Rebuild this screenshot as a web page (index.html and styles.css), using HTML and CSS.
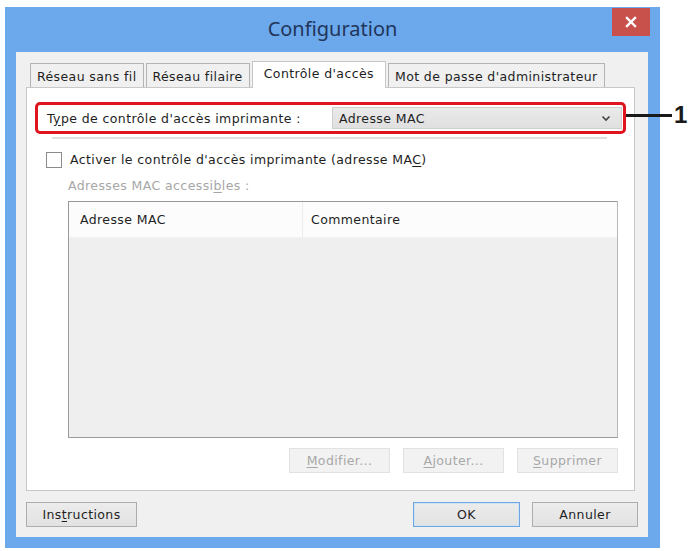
FILE: index.html
```html
<!DOCTYPE html>
<html lang="fr">
<head>
<meta charset="utf-8">
<title>Configuration</title>
<link rel="stylesheet" href="styles.css">
</head>
<body>
<div class="window">
  <div class="titlebar">
    <span class="spacer"></span>
    <div class="title">Configuration</div>
    <div class="close-wrap">
      <div class="close">
        <svg width="12" height="12" viewBox="0 0 12 12"><path d="M2 2 L10 10 M10 2 L2 10" stroke="#fff" stroke-width="2.4" stroke-linecap="square"/></svg>
      </div>
    </div>
  </div>
  <div class="client">
    <div class="tabs">
      <div class="tab">Réseau sans fil</div>
      <div class="tab">Réseau filaire</div>
      <div class="tab active">Contrôle d'accès</div>
      <div class="tab">Mot de passe d'administrateur</div>
    </div>
    <div class="panel">
      <div class="type-row">
        <div class="type-label">T<u>y</u>pe de contrôle d'accès imprimante :</div>
        <div class="select">
          <span>Adresse MAC</span>
          <svg class="chev" width="10" height="7" viewBox="0 0 10 7"><path d="M1.5 1.5 L5 5 L8.5 1.5" fill="none" stroke="#444" stroke-width="1.6"/></svg>
        </div>
      </div>
      <div class="rule"></div>
      <div class="check-row">
        <span class="box"></span>
        <span>Activer le contrôle d'accès imprimante (adresse MA<u>C</u>)</span>
      </div>
      <div class="sub">Adresses MAC accessi<u>b</u>les :</div>
      <div class="list">
        <div class="list-head">
          <div class="col col1">Adresse MAC</div>
          <div class="col col2">Commentaire</div>
        </div>
        <div class="list-body"></div>
      </div>
      <div class="list-actions">
        <div class="btn disabled"><u>M</u>odifier...</div>
        <div class="btn disabled"><u>A</u>jouter...</div>
        <div class="btn disabled"><u>S</u>upprimer</div>
      </div>
    </div>
    <div class="footer">
      <div class="btn wide">Ins<u>t</u>ructions</div>
      <div class="footer-right">
        <div class="btn default">OK</div>
        <div class="btn">Annuler</div>
      </div>
    </div>
  </div>
</div>
<div class="callout">
  <span class="leader"></span>
  <span class="num">1</span>
</div>
</body>
</html>
```
FILE: styles.css
```css
html, body {
  margin: 0;
  padding: 0;
  background: #ffffff;
}
body {
  padding: 7px 0 0 5px;
  font-family: "DejaVu Sans", Verdana, sans-serif;
  font-size: 12.5px;
  letter-spacing: 0.4px;
  color: #1e1e1e;
  position: relative;
  height: 551px;
  box-sizing: border-box;
}
u { text-decoration: underline; text-underline-offset: 2px; }

.window {
  width: 655px;
  height: 541px;
  background: #6ba8ec;
  display: flex;
  flex-direction: column;
  box-sizing: border-box;
}
.titlebar {
  height: 45px;
  display: grid;
  grid-template-columns: 1fr auto 1fr;
  flex: none;
}
.title {
  font-family: "Noto Sans", "Open Sans", sans-serif;
  font-size: 20px;
  letter-spacing: 0;
  color: #22365a;
  align-self: center;
  margin-top: -2px;
}
.close-wrap {
  display: flex;
  justify-content: flex-end;
  align-items: flex-start;
  padding: 1px 10px 0 0;
}
.close {
  width: 38px;
  height: 28px;
  background: #c9514c;
  display: flex;
  align-items: center;
  justify-content: center;
}

.client {
  flex: 1;
  margin: 0 12px 11px 11px;
  background: #f0f0f0;
  padding: 9px 10px 10px 10px;
  display: flex;
  flex-direction: column;
  min-height: 0;
}
.tabs {
  display: flex;
  align-items: flex-end;
  height: 26px;
  margin-left: 4px;
  gap: 2px;
  flex: none;
}
.tab {
  height: 24px;
  box-sizing: border-box;
  border: 1px solid #b4b4b4;
  border-bottom: none;
  background: #f0f0f0;
  padding: 2px 6px 0;
  display: flex;
  align-items: center;
  white-space: nowrap;
}
.tab.active {
  height: 27px;
  margin-bottom: -1px;
  background: #fff;
  padding: 0 11px 4px;
  position: relative;
  z-index: 1;
  border-color: #c8c8c8;
}
.panel {
  flex: 1;
  margin-right: 3px;
  background: #fff;
  border: 1px solid #c8c8c8;
  display: flex;
  flex-direction: column;
}
.type-row {
  margin: 14px 8px 0 8px;
  height: 32px;
  box-sizing: border-box;
  border: 3px solid #e0141e;
  border-radius: 5px;
  padding: 1px 1px 1px 9px;
  display: flex;
  align-items: center;
}
.type-label { flex: 1; }
.select {
  width: 290px;
  height: 22px;
  box-sizing: border-box;
  background: linear-gradient(#eaeaea, #e0e0e0);
  border: 1px solid #cfcfcf;
  display: flex;
  align-items: center;
  justify-content: space-between;
  padding: 0 10px 0 6px;
}
.rule {
  height: 2px;
  background: #e0e0e0;
  margin: 3px 27px 0 25px;
}
.check-row {
  display: flex;
  align-items: center;
  gap: 8px;
  margin: 12px 0 0 19px;
  height: 17px;
}
.box {
  width: 14px;
  height: 14px;
  border: 1px solid #8a8a8a;
  background: #fff;
}
.sub {
  color: #a6a6a6;
  margin: 10px 0 0 41px;
  line-height: 16px;
}
.list {
  margin: 7px 0 0 41px;
  width: 550px;
  height: 237px;
  box-sizing: border-box;
  border: 1px solid #9a9a9a;
  border-right-color: #b8b8b8;
  display: flex;
  flex-direction: column;
}
.list-head {
  height: 35px;
  background: #fcfcfc;
  display: flex;
  border-bottom: 1px solid #f2f2f2;
  flex: none;
}
.col {
  display: flex;
  align-items: center;
  padding-left: 11px;
}
.col1 { width: 222px; border-right: 1px solid #ececec; }
.col2 { padding-left: 8px; }
.list-body {
  flex: 1;
  background: #efefef;
}
.list-actions {
  display: flex;
  justify-content: flex-end;
  gap: 13px;
  margin: 10px 16px 0 0;
}
.btn {
  height: 25px;
  width: 101px;
  box-sizing: border-box;
  border: 1px solid #adadad;
  background: linear-gradient(#ececec, #e2e2e2);
  display: flex;
  align-items: center;
  justify-content: center;
}
.btn.disabled {
  color: #a8a8a8;
  border-color: #e2e2e2;
  background: #f2f2f2;
}
.btn.wide { width: 111px; }
.btn.default {
  width: 107px;
  border-color: #6fa6e0;
  box-shadow: inset 0 0 0 1px #cfe3f7;
}
.footer {
  display: flex;
  justify-content: space-between;
  margin-top: 11px;
  flex: none;
}
.footer-right {
  display: flex;
  gap: 12px;
}
.footer-right .btn:last-child { width: 106px; }

.callout {
  position: absolute;
  left: 626px;
  top: 104px;
  display: flex;
  align-items: center;
  height: 22px;
}
.leader {
  width: 46px;
  height: 3px;
  background: #1a1a1a;
}
.num {
  font-family: "Liberation Sans", Arial, sans-serif;
  font-weight: bold;
  font-size: 24px;
  letter-spacing: 0;
  color: #1a1a1a;
  margin-left: 2px;
}
```
